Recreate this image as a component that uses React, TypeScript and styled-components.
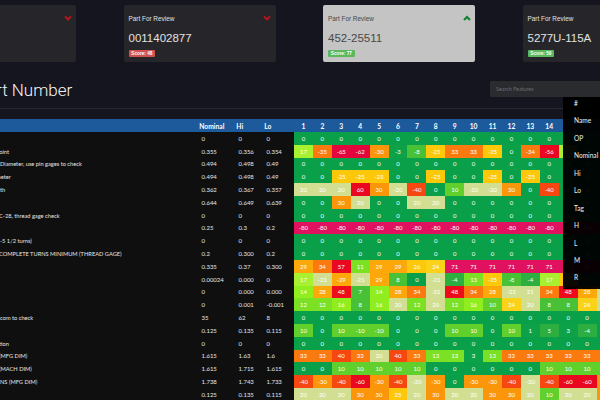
import React from "react";
import styled, { createGlobalStyle } from "styled-components";

const Global = createGlobalStyle`
  html, body { margin: 0; padding: 0; background: #14151e; }
  #root { width: 600px; height: 400px; }
`;

const Viewport = styled.div`
  position: relative;
  width: 600px;
  height: 400px;
  overflow: hidden;
  background: #14151e;
`;

const Page = styled.main`
  width: 676px;
  margin-left: -76px;
`;

const CardRow = styled.section`
  display: flex;
  gap: 47.5px;
  padding-top: 5px;
  height: 57px;
`;

const Card = styled.article<{ $active?: boolean }>`
  flex: 0 0 152px;
  box-sizing: border-box;
  height: 57px;
  padding: 9px 4.5px 0 5px;
  border-radius: 2px;
  background: ${(p) => (p.$active ? "#c4c4c4" : "#26262a")};
  color: ${(p) => (p.$active ? "#484848" : "#e2e2e2")};
  font-family: "Liberation Sans", Arial, sans-serif;
`;

const CardHead = styled.div`
  display: flex;
  justify-content: space-between;
  align-items: center;
  height: 8px;
  font-size: 6.4px;
`;

const PartNo = styled.div`
  margin-top: 8.5px;
  height: 14px;
  line-height: 14px;
  font-size: 11.5px;
`;

const Badge = styled.span<{ $ok: boolean }>`
  display: inline-block;
  margin-top: 5px;
  padding: 0 2.8px;
  height: 7.5px;
  line-height: 7.5px;
  border-radius: 1px;
  font-size: 4.7px;
  font-weight: 700;
  color: #fff;
  vertical-align: top;
  background: ${(p) => (p.$ok ? "#5cb85c" : "#cf5250")};
`;

const TitleBar = styled.header`
  display: flex;
  justify-content: space-between;
  align-items: flex-start;
  box-sizing: border-box;
  height: 47px;
  padding-top: 18px;
  border-bottom: 1px solid #272833;
`;

const Heading = styled.h1`
  margin: 0 0 0 52.5px;
  font-family: "Roboto", "Liberation Sans", sans-serif;
  font-weight: 300;
  font-size: 17px;
  line-height: 20px;
  color: #f4f4f4;
`;

const Search = styled.input`
  box-sizing: border-box;
  width: 110px;
  height: 16px;
  margin-top: 1px;
  padding: 0 6px;
  border: 0;
  border-radius: 1px 0 0 1px;
  outline: 0;
  background: #2a2b2e;
  color: #ccc;
  font-family: "Lato", "Liberation Sans", sans-serif;
  font-size: 5.4px;
  &::placeholder { color: #6a6b70; opacity: 1; }
`;

const Table = styled.section`
  margin-top: 10px;
  width: 700px;
  font-family: "Lato", "Liberation Sans", sans-serif;
  background: #0f0f10;
`;

const Row = styled.div<{ $head?: boolean }>`
  display: grid;
  grid-template-columns: 277px 37px 28px 28px repeat(17, 18.92px);
  height: ${(p) => (p.$head ? "13px" : "12.8px")};
  align-items: stretch;
  background: ${(p) => (p.$head ? "#1d5a9c" : "#0f0f10")};
  color: ${(p) => (p.$head ? "#fff" : "#e6e6e6")};
  font-size: ${(p) => (p.$head ? "6.7px" : "6px")};
  font-weight: ${(p) => (p.$head ? 700 : 400)};
`;

const LabelCell = styled.div<{ $inset: number }>`
  display: flex;
  align-items: center;
  white-space: nowrap;
  font-size: 5.7px;
  padding-left: ${(p) => p.$inset}px;
`;

const NumCell = styled.div<{ $shift?: boolean }>`
  display: flex;
  align-items: center;
  white-space: nowrap;
  padding-left: ${(p) => (p.$shift ? "0" : "0.5px")};
  margin-left: ${(p) => (p.$shift ? "-1.7px" : "0")};
`;

const HeatCell = styled.div<{ $bg?: string }>`
  display: flex;
  align-items: center;
  justify-content: center;
  background: ${(p) => p.$bg ?? "transparent"};
  color: #fff;
`;

const ColumnMenu = styled.nav`
  position: absolute;
  top: 97px;
  right: 0;
  box-sizing: border-box;
  width: 37px;
  height: 192px;
  padding-left: 11px;
  background: rgba(0, 0, 0, 0.96);
  font-family: "Lato", "Liberation Sans", sans-serif;
  font-size: 6.6px;
  color: #f0f0f0;
`;

const MenuList = styled.ul`
  list-style: none;
  margin: -2px 0 0;
  padding: 0;
`;

const MenuItem = styled.li`
  height: 17.45px;
  line-height: 17.45px;
`;

const ChevronIcon = ({ up }: { up?: boolean }) => (
  <svg width="8" height="6" viewBox="0 0 8 6" aria-hidden="true">
    <polyline
      points={up ? "1,5 4,2 7,5" : "1,1.4 4,4.4 7,1.4"}
      fill="none"
      stroke={up ? "#12812b" : "#c0141b"}
      strokeWidth="2"
    />
  </svg>
);

const heatStops: [number, string][] = [
  [0, "#0aa04a"],
  [3, "#0ea248"],
  [5, "#2cae40"],
  [8, "#48c136"],
  [10, "#62d02c"],
  [13, "#7ce024"],
  [16, "#90ee1e"],
  [18, "#a8f030"],
  [23, "#d2df92"],
  [24, "#fad21a"],
  [26, "#fdc80a"],
  [29, "#fda80a"],
  [32, "#fb950a"],
  [35, "#fa7a10"],
  [40, "#f5470f"],
  [48, "#ee0c1c"],
  [60, "#ea0820"],
  [66, "#e2063c"],
  [100, "#e0125f"],
];

const heat = (v: number) => heatStops.find(([m]) => Math.abs(v) <= m)![1];

const zeros = Array.from({ length: 14 }, () => 0);
const pad = (vals: number[], tail: number[] = [0, 0, 0]) => [...vals, ...tail];

type Rec = [string, number, string, string, string, number[]];

const rows: Rec[] = [
  ["", 0, "0", "0", "0", pad(zeros)],
  ["point", 72, "0.355", "0.356", "0.354", pad([17, -35, -65, -62, -30, -3, -8, -25, 33, 33, -25, 0, -34, -56], [17, 0, 0])],
  ["Diameter, use pin gages to check", 76, "0.494", "0.498", "0.49", pad(zeros)],
  ["meter", 72, "0.494", "0.498", "0.49", pad([0, 0, -25, -25, -25, 0, 0, -25, 0, 0, -25, 0, -25, 0])],
  ["th", 76, "0.362", "0.367", "0.357", pad([20, 20, 20, 60, 30, -20, -40, 0, 10, -20, -20, 30, 0, -40])],
  ["", 0, "0.644", "0.649", "0.639", pad([0, 0, 30, 20, 0, 0, 20, 20, 0, 0, 0, 0, 0, 0])],
  ["C-28, thread gage check", 75, "0", "0", "0", pad(zeros)],
  ["", 0, "0.25", "0.3", "0.2", pad(Array.from({ length: 14 }, () => -80), [-80, -80, -80])],
  ["-5 1/2 turns)", 76, "0", "0", "0", pad(zeros)],
  ["COMPLETE TURNS MINIMUM (THREAD GAGE)", 75, "0.2", "0.300", "0.2", pad(zeros)],
  ["", 0, "0.335", "0.37", "0.300", pad([29, 34, 57, 11, 29, 29, 26, 24, 71, 71, 71, 71, 71, 71], [71, 71, 71])],
  ["", 0, "0.00024", "0.000", "0", pad([17, -21, -29, -21, 29, 8, 0, -21, -4, 13, -25, -8, -4, 17], [25, 0, 0])],
  ["", 0, "0", "0.000", "0.000", pad([14, 28, 48, 7, 14, 28, 34, -21, 48, 34, 28, -21, 21, 34, 48], [28, 21])],
  ["", 0, "0", "0.001", "-0.001", pad([12, 12, 16, 8, 16, 20, 12, 20, 12, 16, 10, 24, 20, 8, 8], [24, 20])],
  ["com to check", 76, "35", "62", "8", pad(zeros)],
  ["", 0, "0.125", "0.135", "0.115", pad([10, 0, 10, -10, -10, 0, 0, 0, 10, 10, 0, 10, 1, 5, 3], [-4, 0])],
  ["tion", 75, "0", "0", "0", pad(zeros)],
  ["(MFG DIM)", 75, "1.615", "1.63", "1.6", pad([33, 33, 40, 33, 20, 40, 33, 13, 13, 3, 13, 33, 33, 33, 33], [33, 33])],
  ["(MACH DIM)", 75, "1.615", "1.715", "1.615", pad([0, 0, 10, 10, 10, 10, 10, 0, 0, 0, 0, 0, 0, 10, 10], [10, 10])],
  ["NS (MFG DIM)", 76, "1.738", "1.743", "1.733", pad([-40, -30, -40, -60, -30, -40, -20, -30, 0, -30, -30, -40, -20, -40, -60], [-60, -30])],
  ["", 0, "0.125", "0.135", "0.115", pad([20, 20, 20, 30, 30, 25, 20, 30, 20, 20, 30, 30, 20, 10, 20], [20, 30])],
];

const cards = [
  { no: "", score: null as number | null },
  { no: "0011402877", score: 48 },
  { no: "452-25511", score: 77, active: true },
  { no: "5277U-115A", score: 59 },
];

const menu = ["#", "Name", "OP", "Nominal", "Hi", "Lo", "Tag", "H", "L", "M", "R"];

export default function App() {
  return (
    <Viewport>
      <Global />
      <Page>
        <CardRow>
          {cards.map((c, i) => (
            <Card key={i} $active={c.active}>
              <CardHead>
                <span>Part For Review</span>
                <ChevronIcon up={c.active} />
              </CardHead>
              <PartNo>{c.no}</PartNo>
              {c.score !== null && <Badge $ok={c.score >= 50}>Score: {c.score}</Badge>}
            </Card>
          ))}
        </CardRow>
        <TitleBar>
          <Heading>Part Number</Heading>
          <Search placeholder="Search Features" />
        </TitleBar>
        <Table>
          <Row $head>
            <LabelCell $inset={0} />
            <NumCell $shift>Nominal</NumCell>
            <NumCell $shift>Hi</NumCell>
            <NumCell $shift>Lo</NumCell>
            {Array.from({ length: 14 }, (_, i) => (
              <HeatCell key={i}>{i + 1}</HeatCell>
            ))}
          </Row>
          {rows.map(([label, inset, nom, hi, lo, vals], r) => (
            <Row key={r}>
              <LabelCell $inset={inset}>{label}</LabelCell>
              <NumCell>{nom}</NumCell>
              <NumCell>{hi}</NumCell>
              <NumCell>{lo}</NumCell>
              {vals.map((v, c) => (
                <HeatCell key={c} $bg={heat(v)}>
                  {v}
                </HeatCell>
              ))}
            </Row>
          ))}
        </Table>
      </Page>
      <ColumnMenu>
        <MenuList>
          {menu.map((m) => (
            <MenuItem key={m}>{m}</MenuItem>
          ))}
        </MenuList>
      </ColumnMenu>
    </Viewport>
  );
}
